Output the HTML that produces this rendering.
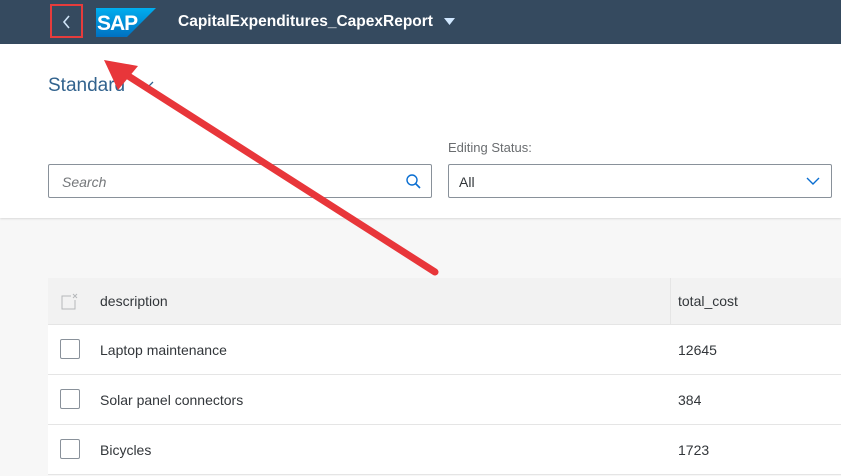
<!DOCTYPE html><html><head><style>
body{margin:0;width:841px;height:476px;overflow:hidden;background:#f7f7f7;font-family:"Liberation Sans",Arial,sans-serif;position:relative}
.hdr{position:absolute;left:0;top:0;width:841px;height:44px;background:#354a5f}
.white{position:absolute;top:44px;left:0;width:841px;height:174px;background:#fff;box-shadow:0 1px 2px rgba(0,0,0,.12)}
.abs{position:absolute}
.inp{position:absolute;height:34px;border:1px solid #89919a;border-radius:2px;background:#fff;box-sizing:border-box;font-size:14px}
.tbl{position:absolute;left:48px;top:278px;width:793px;background:#fff}
.row{height:49px;border-bottom:1px solid #e5e5e5;position:relative;font-size:14px;color:#32363a}
.row span{position:absolute;top:17px}
.cb{position:absolute;left:12px;top:14px;width:20px;height:20px;border:1px solid #89919a;border-radius:2px;box-sizing:border-box}
</style></head><body>
<div class="hdr"></div>
<div class="abs" style="left:50px;top:4px;width:33px;height:34px;border:2px solid #e53c3c;box-sizing:border-box"></div>
<svg class="abs" style="left:60px;top:12px" width="14" height="20"><path d="M9 4 L4 10 L9 16" stroke="#cfe4f8" stroke-width="1.6" fill="none"/></svg>
<svg class="abs" style="left:96px;top:8px" width="60" height="29"><defs><linearGradient id="g" x1="0" y1="0" x2="0" y2="1"><stop offset="0" stop-color="#00aeef"/><stop offset="1" stop-color="#0070c0"/></linearGradient></defs><path d="M0 0H60L31 29H0Z" fill="url(#g)"/><text x="1" y="22" font-family="Liberation Sans" font-weight="bold" font-size="21" fill="#fff" letter-spacing="-1">SAP</text></svg>
<div class="abs" style="left:178px;top:13px;color:#fff;font-weight:bold;font-size:15.5px">CapitalExpenditures_CapexReport</div>
<svg class="abs" style="left:444px;top:18px" width="11" height="8"><path d="M0 0H11L5.5 7Z" fill="#d1e8ff"/></svg>
<div class="white"></div>
<div class="abs" style="left:48px;top:75px;font-size:19px;color:#32638e">Standard</div>
<svg class="abs" style="left:142px;top:80px" width="12" height="10"><path d="M1 2L6 7L11 2" stroke="#32638e" stroke-width="1.3" fill="none"/></svg>
<div class="abs" style="left:448px;top:140px;font-size:13px;color:#6a6d70">Editing Status:</div>
<div class="inp" style="left:48px;top:164px;width:384px"><span class="abs" style="left:13px;top:9px;font-style:italic;color:#74777a">Search</span>
<svg class="abs" style="left:356px;top:8px" width="16" height="16"><circle cx="7" cy="7" r="5" stroke="#0a6ed1" stroke-width="1.4" fill="none"/><path d="M10.5 10.5L15 15" stroke="#0a6ed1" stroke-width="1.6"/></svg></div>
<div class="inp" style="left:448px;top:164px;width:384px"><span class="abs" style="left:10px;top:9px;color:#32363a">All</span>
<svg class="abs" style="left:357px;top:11px" width="14" height="10"><path d="M1 2L7 8L13 2" stroke="#0a6ed1" stroke-width="1.4" fill="none"/></svg></div>
<div class="tbl">
<div class="row" style="background:#f2f2f2;height:46px"><svg class="abs" style="left:13px;top:15px" width="18" height="17"><path d="M10 3H1V16H14V7" stroke="#b5b8ba" fill="none"/><path d="M12 1L16 5M16 1L12 5" stroke="#b5b8ba"/></svg><span style="left:52px;top:15px">description</span><span style="left:630px;top:15px">total_cost</span><div class="abs" style="left:622px;top:0;width:1px;height:46px;background:#e5e5e5"></div></div>
<div class="row"><div class="cb"></div><span style="left:52px">Laptop maintenance</span><span style="left:630px">12645</span></div>
<div class="row"><div class="cb"></div><span style="left:52px">Solar panel connectors</span><span style="left:630px">384</span></div>
<div class="row"><div class="cb"></div><span style="left:52px">Bicycles</span><span style="left:630px">1723</span></div>
</div>
<svg class="abs" style="left:0;top:0" width="841" height="476"><path d="M435 272L122 72" stroke="#e8363a" stroke-width="7" stroke-linecap="round"/><path d="M104 60L138 66L118 90Z" fill="#e8363a"/></svg>
</body></html>
